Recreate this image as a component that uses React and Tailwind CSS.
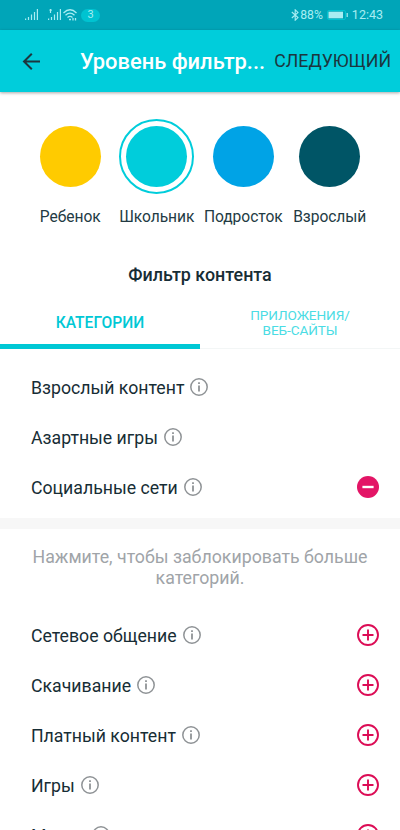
import React from "react";

const levels = [
  { name: "Ребенок", color: "bg-[#ffcb00]" },
  { name: "Школьник", color: "bg-[#00cddb]", selected: true },
  { name: "Подросток", color: "bg-[#00a3e6]" },
  { name: "Взрослый", color: "bg-[#005566]" },
];
const blocked = [
  { name: "Взрослый контент" },
  { name: "Азартные игры" },
  { name: "Социальные сети", action: "remove" },
];
const available = ["Сетевое общение", "Скачивание", "Платный контент", "Игры", "Медиа"];

function Info() {
  return (
    <svg className="ml-[6px] size-[18px] shrink-0" viewBox="0 0 18 18" fill="none">
      <circle cx="9" cy="9" r="8.2" stroke="#8f9396" strokeWidth="1.5" />
      <path d="M9 7.6V13.6M9 4.3V6" stroke="#8f9396" strokeWidth="1.8" />
    </svg>
  );
}

function Action({ type }) {
  if (type === "remove") {
    return (
      <svg className="size-[22px]" viewBox="0 0 22 22" fill="none">
        <circle cx="11" cy="11" r="11" fill="#e31566" />
        <path d="M5.4 11H16.6" stroke="white" strokeWidth="2.4" />
      </svg>
    );
  }
  return (
    <svg className="size-[22px]" viewBox="0 0 22 22" fill="none" stroke="#dc0c55" strokeWidth="1.9">
      <circle cx="11" cy="11" r="10" />
      <path d="M5.5 11H16.5M11 5.5V16.5" />
    </svg>
  );
}

function Row({ name, action }) {
  return (
    <div className="flex h-[50px] shrink-0 items-center pr-[21px] pl-[31px]">
      <span className="pt-[2px] text-[17.7px] whitespace-nowrap text-[#172d35]">{name}</span>
      <Info />
      <span className="ml-auto">{action && <Action type={action} />}</span>
    </div>
  );
}

function Signal() {
  return (
    <svg className="h-3 w-[13px]" viewBox="0 0 13 12" stroke="#a8edf2" strokeWidth="1.2">
      <path d="M.6 9.5V11M3.5 8V11M6.5 5.5V11M9.5 3V11M12.4 0V11" />
    </svg>
  );
}

function StatusBar() {
  return (
    <div className="flex h-[30px] shrink-0 items-center bg-[#00a5b8] pr-[17px] pl-[25px] text-[#a8edf2]">
      <Signal />
      <svg className="ml-[10px] h-3 w-[13px]" viewBox="0 0 13 12" stroke="#a8edf2" strokeWidth="1.2">
        <path d="M.6 9.5V11M3.5 8V11M6.5 5.5V11M9.5 3V11M12.4 0V11M2.5 0V4M1.5 1.2H3.8" />
      </svg>
      <svg className="ml-[2px] h-3 w-[14px]" viewBox="0 0 14 12" fill="none" stroke="#a8edf2" strokeWidth="1.3">
        <path d="M.5 4Q7-2.5 13.5 4M2.5 6.3Q7 2 11.5 6.3M4.5 8.5Q7 6.2 9.5 8.5" />
        <path d="M6 10.5H8M10 9V11.5M12.5 9V11.5" />
      </svg>
      <span className="ml-[4px] flex h-[13px] w-[19px] items-center justify-center rounded-full bg-[#00c3d1] pt-px text-[11px]">3</span>
      <svg className="ml-auto h-3 w-[8px]" viewBox="0 0 8 12" fill="none" stroke="#a8edf2" strokeWidth="1.1">
        <path d="M.8 3L7 8.6L4.2 11.2V.8L7 3.4L.8 9" />
      </svg>
      <span className="ml-px pt-px text-[12.2px] leading-none">88%</span>
      <svg className="ml-[4px] h-[10px] w-[21px]" viewBox="0 0 21 10" fill="none">
        <rect x=".5" y=".5" width="18" height="9" rx="1.5" stroke="#00c3d1" />
        <rect x="1.5" y="1.7" width="14.5" height="6.6" fill="#a8edf2" />
        <path d="M20.2 3V7" stroke="#a8edf2" strokeWidth="1.2" />
      </svg>
      <span className="ml-[4px] pt-px text-[12.5px] leading-none">12:43</span>
    </div>
  );
}

export default function App() {
  return (
    <div className="flex h-[830px] w-[400px] flex-col overflow-hidden bg-white font-[Roboto,'Noto_Sans',sans-serif]">
      <StatusBar />
      <header className="z-10 flex h-[62px] shrink-0 items-center bg-[#00cddb] pl-[22px] shadow-[0_1px_3px_rgba(0,0,0,0.35)]">
        <svg className="size-[19px]" viewBox="0 0 19 19" fill="none" stroke="#1c363e" strokeWidth="2">
          <path d="M18 9.5H2M9.8 1.7L2 9.5L9.8 17.3" />
        </svg>
        <h1 className="ml-[39px] pt-[2px] text-[21.9px] font-medium whitespace-nowrap text-white">Уровень фильтр...</h1>
        <button className="mr-[9px] ml-auto pt-px text-[17.7px] whitespace-nowrap text-[#1c363e]">СЛЕДУЮЩИЙ</button>
      </header>
      <div className="mx-[27px] grid h-[144px] shrink-0 grid-cols-4 pt-[27px]">
        {levels.map(({ name, color, selected }) => (
          <div key={name} className="flex flex-col items-center">
            <div className={`flex size-[75px] items-center justify-center rounded-full ${selected ? "border-2 border-[#00cddb]" : ""}`}>
              <span className={`size-[61px] rounded-full ${color}`} />
            </div>
            <span className="mt-[13px] text-[15.6px] leading-5 tracking-[-0.05px] whitespace-nowrap text-[#233b44]">{name}</span>
          </div>
        ))}
      </div>
      <h2 className="mt-[27px] shrink-0 text-center text-[17.9px] leading-6 font-medium text-[#172d35]">Фильтр контента</h2>
      <div className="mt-[11px] grid h-[51px] shrink-0 grid-cols-2 text-center">
        <div className="flex items-center justify-center border-b-[5px] border-[#00c8d5] pt-[5px] text-[15.6px] font-medium text-[#00c8d5]">КАТЕГОРИИ</div>
        <div className="flex items-center justify-center border-b border-[#f3f6f6] text-[13.6px] leading-[15px] tracking-[-0.1px] text-[#4bdce4]">
          ПРИЛОЖЕНИЯ/<br />ВЕБ-САЙТЫ
        </div>
      </div>
      <section className="flex shrink-0 flex-col pt-[13px] pb-[6px]">
        {blocked.map((item) => <Row key={item.name} {...item} />)}
      </section>
      <div className="h-[11px] shrink-0 bg-[#f7f7f7]" />
      <p className="mt-[18px] mb-[21px] shrink-0 text-center text-[17.75px] leading-[21px] text-[#a0a4a8]">
        Нажмите, чтобы заблокировать больше<br />категорий.
      </p>
      <section className="flex flex-col">
        {available.map((name) => <Row key={name} name={name} action="add" />)}
      </section>
    </div>
  );
}
